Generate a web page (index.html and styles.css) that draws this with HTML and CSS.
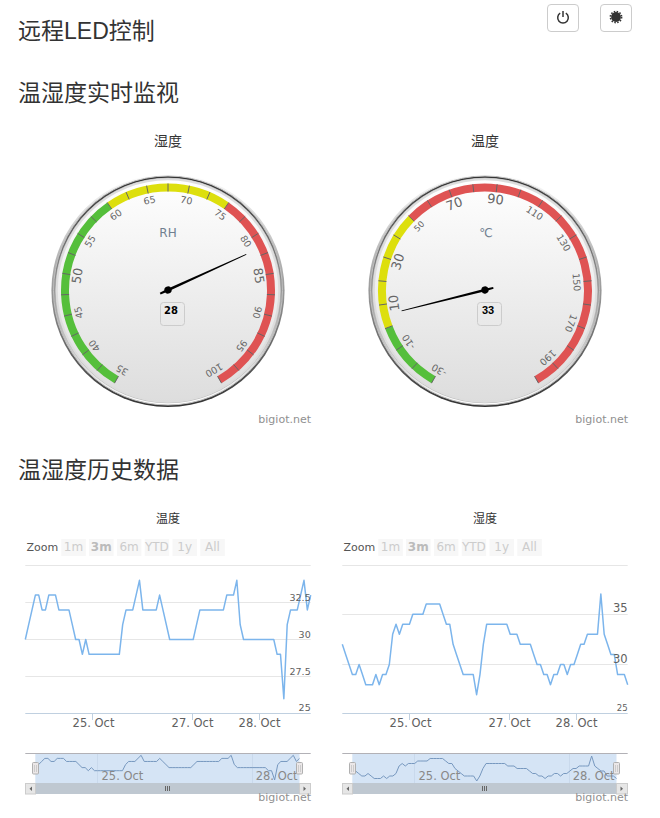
FILE: index.html
```html
<!DOCTYPE html>
<html lang="zh-CN">
<head>
    <meta charset="UTF-8">
    <meta name="viewport" content="width=device-width, initial-scale=1.0">
    <title>远程LED控制</title>
    <link rel="stylesheet" href="styles.css">
</head>
<body>
    <div class="topbar">
        <h3 class="first-title">远程LED控制</h3>
        <div class="switches">
            <button class="icon-btn" type="button" aria-label="off">
                <svg class="icon" viewBox="0 0 14 14">
                    <path class="icon-line" d="M4.2 3.2 A5.3 5.3 0 1 0 9.8 3.2"/>
                    <path class="icon-line" d="M7 1 V7"/>
                </svg>
            </button>
            <button class="icon-btn" type="button" aria-label="on">
                <svg class="icon" viewBox="0 0 14 14">
                    <circle class="icon-fill" cx="7" cy="7" r="4.9"/>
                    <circle class="icon-spikes" cx="7" cy="7" r="5.6"/>
                </svg>
            </button>
        </div>
    </div>

    <h3 class="section-title">温湿度实时监视</h3>
    <div class="chart-row">
        <svg id="gauge-rh" class="gauge" viewBox="0 0 305 300"></svg>
        <svg id="gauge-temp" class="gauge" viewBox="0 0 305 300"></svg>
    </div>

    <h3 class="section-title history-title">温湿度历史数据</h3>
    <div class="chart-row">
        <svg id="history-temp" class="history" viewBox="0 0 305 305"></svg>
        <svg id="history-rh" class="history" viewBox="0 0 305 305"></svg>
    </div>

    <script src="charts.js"></script>
</body>
</html>
```

FILE: styles.css
```css
html, body {
    margin: 0;
    background-color: #fff;
    overflow: hidden;
}

body {
    height: 818px;
    font-family: "Liberation Sans", "Noto Sans CJK SC", sans-serif;
    color: #333;
}

h3 {
    margin: 0;
    font-size: 23px;
    line-height: 26px;
    font-weight: 400;
}

.topbar {
    display: flex;
    justify-content: space-between;
    align-items: flex-start;
    padding: 4px 28px 0 18px;
    height: 40px;
}

.first-title {
    margin-top: 14px;
}

.switches {
    display: flex;
    gap: 21px;
}

.icon-btn {
    display: flex;
    align-items: center;
    justify-content: center;
    width: 32px;
    height: 28px;
    padding: 0;
    background-color: #fff;
    border: 1px solid #ccc;
    border-radius: 4px;
}

.icon {
    width: 14px;
    height: 14px;
    margin-bottom: 2px;
}

.icon-line {
    fill: none;
    stroke: #333;
    stroke-width: 1.5;
}

.icon-fill {
    fill: #333;
}

.icon-spikes {
    fill: none;
    stroke: #333;
    stroke-width: 1.6;
    stroke-dasharray: 1.5 1.43;
}

.section-title {
    margin: 36px 0 0 18px;
}

.history-title {
    margin-top: 27px;
}

.chart-row {
    display: grid;
    grid-template-columns: 305px 305px;
    column-gap: 12px;
    padding-left: 16px;
    margin-top: 24px;
}

.history-title + .chart-row {
    margin-top: 22px;
}

.gauge {
    display: block;
    width: 305px;
    height: 300px;
}

.history {
    display: block;
    width: 305px;
    height: 305px;
}

/* chart text */
svg text {
    font-family: "DejaVu Sans", "Noto Sans CJK SC", sans-serif;
}

svg text.chart-title {
    font-family: "Liberation Sans", "Noto Sans CJK SC", sans-serif;
    fill: #333;
    text-anchor: middle;
}

.gauge .chart-title {
    font-size: 14px;
}

.history .chart-title {
    font-size: 12px;
}

.credit {
    font-size: 11px;
    fill: #909090;
    text-anchor: end;
}

/* gauge */
.band {
    fill: none;
    stroke-width: 8;
}

.band-green { stroke: #55bf3b; }
.band-yellow { stroke: #dddf0d; }
.band-red { stroke: #df5353; }

.tick {
    stroke: #666;
    stroke-width: 1;
}

.scale-label {
    fill: #666;
    text-anchor: middle;
}

.unit {
    font-size: 12px;
    fill: #708090;
    text-anchor: middle;
}

.pane-edge {
    stroke: #c0c0c0;
    stroke-width: 1;
}

.pane-ring {
    fill: none;
    stroke: #ddd;
    stroke-width: 2;
}

.needle,
.pivot {
    fill: #000;
}

.value-box {
    fill: none;
    stroke: #ccc;
    stroke-width: 1;
}

.value {
    font-weight: bold;
    fill: #000;
    text-anchor: middle;
}

.value-rh {
    font-size: 10px;
}

svg text.value-temp {
    font-family: "Liberation Sans", sans-serif;
    font-size: 11px;
}

/* history chart */
.grid-line {
    stroke: #e6e6e6;
    stroke-width: 1;
}

.axis-line {
    stroke: #c0d0e0;
    stroke-width: 1;
}

.series {
    fill: none;
    stroke: #7cb5ec;
    stroke-width: 1.5;
    stroke-linejoin: round;
}

.zoom-label {
    font-size: 11px;
    fill: #555;
}

.range-btn {
    fill: #f7f7f7;
}

.range-text {
    font-size: 12px;
    fill: #ccc;
    text-anchor: middle;
}

.range-active {
    font-weight: bold;
    fill: #bbb;
}

.axis-label {
    font-size: 11.5px;
    fill: #606060;
    text-anchor: middle;
}

.y-label {
    fill: #606060;
    text-anchor: end;
}

/* navigator */
.nav-top {
    stroke: #b2b1b6;
    stroke-width: 1;
}

.nav-mask {
    fill: #d5e4f5;
}

.nav-grid {
    stroke: #c9d9ec;
    stroke-width: 1;
}

.nav-series {
    fill: none;
    stroke: #7798bf;
    stroke-width: 1;
}

.nav-label {
    font-size: 11.5px;
    fill: #888;
}

.nav-handle {
    fill: #ebe7e8;
    stroke: #b0b0b0;
    stroke-width: 1;
}

.nav-grip {
    stroke: #ccc;
    stroke-width: 1;
}

.scroll-track {
    fill: #bfc8d1;
}

.scroll-btn {
    fill: #e6e6e6;
    stroke: #ccc;
    stroke-width: 1;
}

.scroll-arrow {
    fill: #666;
}

.scroll-rifle {
    stroke: #666;
    stroke-width: 1;
}
```

FILE: charts.js
```js
const CX = 152;
const CY = 160.5;

function polar(r, deg) {
    const a = (deg - 90) * Math.PI / 180;
    return [CX + r * Math.cos(a), CY + r * Math.sin(a)];
}

function arc(r, from, to) {
    const p1 = polar(r, from);
    const p2 = polar(r, to);
    const large = to - from > 180 ? 1 : 0;
    return `M${p1[0]} ${p1[1]} A${r} ${r} 0 ${large} 1 ${p2[0]} ${p2[1]}`;
}

function buildGauge(g) {
    const toAngle = v => -150 + (v - g.min) * 300 / (g.max - g.min);
    let s = `<defs>
        <linearGradient id="${g.id}-a" x1="0" y1="0" x2="0" y2="1"><stop offset="0" stop-color="#fff"/><stop offset="1" stop-color="#333"/></linearGradient>
        <linearGradient id="${g.id}-b" x1="0" y1="0" x2="0" y2="1"><stop offset="0" stop-color="#333"/><stop offset="1" stop-color="#fff"/></linearGradient>
        <linearGradient id="${g.id}-c" x1="0" y1="0" x2="0" y2="1"><stop offset="0" stop-color="#fff"/><stop offset="1" stop-color="#ddd"/></linearGradient>
    </defs>`;

    s += `<text class="chart-title" x="152" y="16">${g.title}</text>`;

    // pane: two gradient rings, the face and a thin ring inside
    s += `<circle cx="${CX}" cy="${CY}" r="116.6" fill="url(#${g.id}-a)"/>`;
    s += `<circle class="pane-edge" cx="${CX}" cy="${CY}" r="114.5" fill="url(#${g.id}-b)"/>`;
    s += `<circle class="pane-edge" cx="${CX}" cy="${CY}" r="112.3" fill="url(#${g.id}-c)"/>`;
    s += `<circle class="pane-ring" cx="${CX}" cy="${CY}" r="111.2"/>`;

    g.bands.forEach(b => {
        s += `<path class="band band-${b[2]}" d="${arc(103, toAngle(b[0]), toAngle(b[1]))}"/>`;
    });

    for (let v = g.min; v <= g.max + 0.01; v += g.tick) {
        const a = toAngle(v);
        const p1 = polar(99, a);
        const p2 = polar(107, a);
        s += `<line class="tick" x1="${p1[0]}" y1="${p1[1]}" x2="${p2[0]}" y2="${p2[1]}"/>`;
    }

    for (let v = g.min; v <= g.max; v += g.step) {
        const a = toAngle(v);
        const p = polar(g.labelR, a);
        const size = g.sizes[v] || 9.5;
        s += `<text class="scale-label" font-size="${size}" dy=".35em" transform="translate(${p[0]} ${p[1]}) rotate(${a})">${v}</text>`;
    }

    s += `<text class="unit" x="${g.unitX}" y="107">${g.unit}</text>`;

    s += `<g transform="translate(${CX} ${CY - 0.5}) rotate(${g.needle})">
        <polygon class="needle" points="-1,8.6 -1.3,0 -0.4,-86 0.4,-86 1.3,0 1,8.6"/>
        <circle class="pivot" r="3.6"/>
    </g>`;

    s += `<rect class="value-box" x="144.5" y="172.5" width="24" height="23" rx="3"/>`;
    s += `<text class="value ${g.valueClass}" x="155" y="183.5">${g.value}</text>`;
    s += `<text class="credit" x="295" y="293">bigiot.net</text>`;

    document.getElementById(g.id).innerHTML = s;
}

const LEFT = 9.3;
const RIGHT = 294.7;
const STEP = 285.4 / 85;
const RANGES = ['1m', '3m', '6m', 'YTD', '1y', 'All'];

function buildHistory(c) {
    let s = `<text class="chart-title" x="152" y="17.5">${c.title}</text>`;

    s += `<text class="zoom-label" x="10.5" y="46">Zoom</text>`;
    RANGES.forEach((r, i) => {
        const x = 45.3 + i * 27.8;
        const cls = i === 1 ? 'range-text range-active' : 'range-text';
        s += `<rect class="range-btn" x="${x}" y="34" width="24.5" height="17"/>`;
        s += `<text class="${cls}" x="${x + 12.2}" y="45.5">${r}</text>`;
    });

    c.grid.forEach(y => {
        s += `<line class="grid-line" x1="${LEFT}" x2="${RIGHT}" y1="${y}" y2="${y}"/>`;
    });
    s += `<line class="axis-line" x1="${LEFT}" x2="${RIGHT}" y1="208.5" y2="208.5"/>`;

    const line = c.data.map((v, i) => `${LEFT + i * STEP},${c.y0 - (v - c.v0) * c.unit}`);
    s += `<polyline class="series" points="${line.join(' ')}"/>`;

    [[76.5, 77.5, '25. Oct'], [176.5, 176.5, '27. Oct'], [243.5, 243.5, '28. Oct']].forEach(t => {
        s += `<line class="axis-line" x1="${t[0]}" x2="${t[0]}" y1="208.5" y2="215"/>`;
        s += `<text class="axis-label" x="${t[1]}" y="221.7">${t[2]}</text>`;
    });

    c.yLabels.forEach(l => {
        s += `<text class="y-label" font-size="${l[2]}" x="${RIGHT}" y="${l[1]}">${l[0]}</text>`;
    });

    // navigator
    const navStep = 264 / 85;
    const nav = c.data.map((v, i) => `${19.5 + i * navStep},${c.navTop + (c.navMax - v) * c.navUnit}`);
    s += `<rect class="nav-mask" x="19.3" y="248.5" width="264.2" height="30"/>`;
    s += `<line class="nav-grid" x1="81.5" x2="81.5" y1="248.5" y2="278"/>`;
    s += `<line class="nav-grid" x1="236.5" x2="236.5" y1="248.5" y2="278"/>`;
    s += `<polyline class="nav-series" points="${nav.join(' ')}"/>`;
    s += `<line class="nav-top" x1="${LEFT}" x2="${RIGHT}" y1="248.5" y2="248.5"/>`;
    s += `<text class="nav-label" x="85.5" y="275">25. Oct</text>`;
    s += `<text class="nav-label" x="239.7" y="275">28. Oct</text>`;

    [16.5, 280.5].forEach(x => {
        s += `<rect class="nav-handle" x="${x}" y="257.5" width="6" height="11.5" rx="1"/>`;
        s += `<line class="nav-grip" x1="${x + 2}" x2="${x + 2}" y1="260" y2="267"/>`;
        s += `<line class="nav-grip" x1="${x + 4}" x2="${x + 4}" y1="260" y2="267"/>`;
    });

    // scrollbar
    s += `<rect class="scroll-track" x="19.3" y="278" width="264.2" height="11"/>`;
    s += `<rect class="scroll-btn" x="9.5" y="278.5" width="10" height="10.5"/>`;
    s += `<rect class="scroll-btn" x="283.5" y="278.5" width="11" height="10.5"/>`;
    s += `<polygon class="scroll-arrow" points="16,281.5 16,286 13.5,283.7"/>`;
    s += `<polygon class="scroll-arrow" points="287.5,281.5 287.5,286 290,283.7"/>`;
    [149.5, 151.5, 153.5].forEach(x => {
        s += `<line class="scroll-rifle" x1="${x}" x2="${x}" y1="281" y2="286"/>`;
    });

    s += `<text class="credit" x="295" y="296">bigiot.net</text>`;

    document.getElementById(c.id).innerHTML = s;
}

buildGauge({
    id: 'gauge-rh', title: '湿度', min: 35, max: 100, tick: 2.5, step: 5, labelR: 92,
    bands: [[35, 60, 'green'], [60, 75, 'yellow'], [75, 100, 'red']],
    sizes: { 50: 12.5, 85: 12.5 },
    unit: 'RH', unitX: 152, needle: 65.5, value: 28, valueClass: 'value-rh'
});

buildGauge({
    id: 'gauge-temp', title: '温度', min: -30, max: 200, tick: 10, step: 20, labelR: 92,
    bands: [[-30, 0, 'green'], [0, 50, 'yellow'], [50, 200, 'red']],
    sizes: { 10: 13, 30: 13, 50: 8.5, 70: 13, 90: 13, 110: 9.5 },
    unit: '℃', unitX: 153, needle: -104.1, value: 33, valueClass: 'value-temp'
});

buildHistory({
    id: 'history-temp', title: '温度', y0: 134.5, v0: 30, unit: 14.8,
    grid: [60.5, 97.5, 134.5, 171.5],
    yLabels: [['32.5', 96, 9.5], ['30', 132.7, 9.5], ['27.5', 170, 9.5], ['25', 205.7, 9.5]],
    navTop: 250.3, navMax: 34, navUnit: 3.08,
    data: [30, 31, 32, 33, 33, 32, 32, 33, 33, 33, 32, 32, 32, 32, 31, 30, 30, 29, 30, 29,
        29, 29, 29, 29, 29, 29, 29, 29, 29, 31, 32, 32, 32, 33, 34, 32, 32, 32, 32, 32,
        33, 32, 31, 30, 30, 30, 30, 30, 30, 30, 30, 31, 32, 32, 32, 32, 32, 32, 32, 32,
        33, 33, 33, 34, 31, 30, 30, 30, 30, 30, 30, 30, 30, 30, 30, 29, 29, 26, 31, 32,
        32, 32, 33, 34, 32, 33]
});

buildHistory({
    id: 'history-rh', title: '湿度', y0: 159.5, v0: 30, unit: 10.07,
    grid: [60.5, 109.5, 159.5],
    yLabels: [['35', 107.3, 11.5], ['30', 157.7, 11.5], ['25', 205.7, 8.5]],
    navTop: 251, navMax: 37, navUnit: 2.5,
    data: [32, 31, 30, 29, 29, 30, 29, 28, 28, 28, 29, 28, 29, 29, 30, 33, 34, 33, 34, 34,
        34, 35, 35, 35, 35, 36, 36, 36, 36, 36, 35, 34, 34, 32, 31, 30, 29, 29, 29, 29,
        27, 29, 32, 34, 34, 34, 34, 34, 34, 34, 33, 33, 33, 32, 32, 32, 32, 31, 30, 30,
        29, 29, 28, 29, 29, 30, 30, 29, 30, 30, 31, 32, 32, 33, 33, 33, 33, 37, 33, 32,
        31, 31, 29, 29, 29, 28]
});
```
